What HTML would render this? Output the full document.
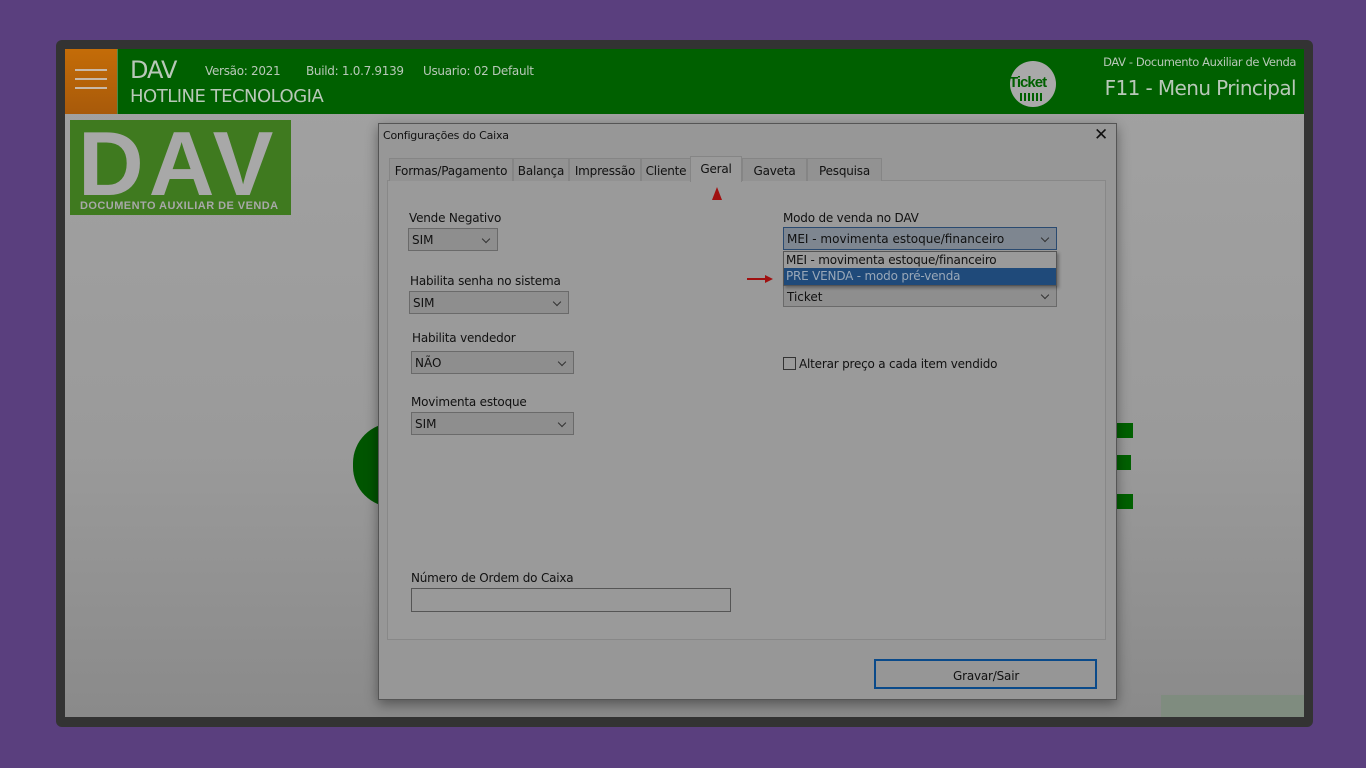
<!DOCTYPE html>
<html><head><meta charset="utf-8"><style>
*{margin:0;padding:0;box-sizing:border-box}
body{width:1366px;height:768px;background:#5a3f7e;position:relative;overflow:hidden;font-family:"Liberation Sans","DejaVu Sans",sans-serif;}
.frame{position:absolute;left:56px;top:40px;width:1257px;height:687px;background:#333;border-radius:6px}
.app{position:absolute;left:65px;top:49px;width:1239px;height:668px;background:linear-gradient(#a2a2a2,#9a9a9a 60%,#8a8a8a);overflow:hidden}
.hdr{position:absolute;left:0;top:0;width:1239px;height:65px;background:#006000}
.burger{position:absolute;left:0;top:0;width:52px;height:65px;background:linear-gradient(#c46c08,#a85a0a)}
.burger i{position:absolute;left:10px;width:32px;height:2px;background:#c8b8a8}
.t{position:absolute;color:#b8c8b8;white-space:nowrap}
.abs{position:absolute}
.dlg{position:absolute;left:378px;top:123px;width:739px;height:577px;background:#979797;border:1px solid #555;box-shadow:0 4px 12px rgba(0,0,0,.4)}
.lbl{position:absolute;font-size:12px;color:#111;white-space:nowrap;font-family:"DejaVu Sans",sans-serif;letter-spacing:-.2px}
.sel{position:absolute;height:23px;border:1px solid #6a6a6a;background:#8e8e8e;font-size:12px;color:#111;padding:4px 0 0 3px;font-family:"DejaVu Sans",sans-serif}
.sel:after{content:"";position:absolute;right:8px;top:7px;width:5px;height:5px;border-right:1px solid #333;border-bottom:1px solid #333;transform:rotate(45deg)}
.tab{position:absolute;top:158px;height:23px;border:1px solid #858585;border-bottom:none;background:#929292;font-size:12px;color:#111;padding:5px 0 0;text-align:center;font-family:"DejaVu Sans",sans-serif;letter-spacing:-.2px}
</style></head><body>
<div class="frame"></div>
<div class="app">
 <div class="hdr">
  <div class="burger"><i style="top:20px"></i><i style="top:29px"></i><i style="top:38px"></i></div>
  <div class="abs" style="left:52px;top:0;width:1px;height:65px;background:#4a8a4a"></div>
  <div class="t" style="left:65px;top:7px;font-size:24px;font-family:'DejaVu Sans',sans-serif;letter-spacing:-1px">DAV</div>
  <div class="t" style="left:140px;top:15px;font-size:12px;font-family:'DejaVu Sans',sans-serif;letter-spacing:-.3px">Versão: 2021</div>
  <div class="t" style="left:241px;top:15px;font-size:12px;font-family:'DejaVu Sans',sans-serif;letter-spacing:-.3px">Build: 1.0.7.9139</div>
  <div class="t" style="left:358px;top:15px;font-size:12px;font-family:'DejaVu Sans',sans-serif;letter-spacing:-.3px">Usuario: 02 Default</div>
  <div class="t" style="left:65px;top:37px;font-size:18px;font-family:'DejaVu Sans',sans-serif;letter-spacing:-.5px">HOTLINE TECNOLOGIA</div>
  <div class="abs" style="left:945px;top:12px;width:46px;height:46px;border-radius:50%;background:#a9a9a9"></div>
  <div class="t" style="left:944px;top:25px;font-size:15px;font-weight:bold;color:#006000;letter-spacing:-1px">Ticket</div>
  <div class="abs" style="left:955px;top:44px;width:24px;height:8px;background:repeating-linear-gradient(90deg,#006000 0 2px,transparent 2px 4px)"></div>
  <div class="t" style="right:8px;top:6px;font-size:11.5px;font-family:'DejaVu Sans',sans-serif;letter-spacing:-.4px">DAV - Documento Auxiliar de Venda</div>
  <div class="t" style="right:8px;top:27px;font-size:20px;font-family:'DejaVu Sans',sans-serif;letter-spacing:-.6px">F11 - Menu Principal</div>
 </div>
 <div class="abs" style="left:5px;top:71px;width:221px;height:95px;background:#3f7a1f"></div>
 <div class="t" style="left:13px;top:70px;font-size:91px;line-height:91px;font-weight:bold;color:#a8a8a8;letter-spacing:5px">DAV</div>
 <div class="t" style="left:15px;top:151px;font-size:11px;font-weight:bold;color:#a8a8a8;letter-spacing:.45px">DOCUMENTO AUXILIAR DE VENDA</div>
 <div class="abs" style="left:288px;top:374px;width:40px;height:84px;border-radius:40px 0 0 40px;background:#005500"></div>
 <div class="abs" style="left:1052px;top:374px;width:16px;height:15px;background:#006000"></div>
 <div class="abs" style="left:1052px;top:406px;width:14px;height:15px;background:#006000"></div>
 <div class="abs" style="left:1052px;top:445px;width:16px;height:15px;background:#006000"></div>
 <div class="abs" style="left:1096px;top:646px;width:143px;height:22px;background:#7f8c7f"></div>
</div>
<div class="dlg"></div>
<div class="lbl" style="left:383px;top:129px;font-size:11px">Configurações do Caixa</div>
<div class="lbl" style="left:1094px;top:125px;font-size:17px">✕</div>
<div class="abs" style="left:387px;top:180px;width:719px;height:460px;background:#9a9a9a;border:1px solid #888"></div>
<div class="tab" style="left:389px;width:124px">Formas/Pagamento</div>
<div class="tab" style="left:513px;width:56px">Balança</div>
<div class="tab" style="left:569px;width:72px">Impressão</div>
<div class="tab" style="left:641px;width:50px">Cliente</div>
<div class="tab" style="left:690px;top:156px;height:26px;width:52px;background:#9a9a9a;padding-top:5px">Geral</div>
<div class="tab" style="left:742px;width:65px">Gaveta</div>
<div class="tab" style="left:807px;width:75px">Pesquisa</div>
<div class="abs" style="left:712px;top:187px;width:0;height:0;border-left:5px solid transparent;border-right:5px solid transparent;border-bottom:13px solid #a01010"></div>

<div class="lbl" style="left:409px;top:211px">Vende Negativo</div>
<div class="sel" style="left:408px;top:228px;width:90px">SIM</div>
<div class="lbl" style="left:410px;top:274px">Habilita senha no sistema</div>
<div class="sel" style="left:409px;top:291px;width:160px">SIM</div>
<div class="lbl" style="left:412px;top:331px">Habilita vendedor</div>
<div class="sel" style="left:411px;top:351px;width:163px">NÃO</div>
<div class="lbl" style="left:411px;top:395px">Movimenta estoque</div>
<div class="sel" style="left:411px;top:412px;width:163px">SIM</div>
<div class="lbl" style="left:411px;top:571px">Número de Ordem do Caixa</div>
<div class="abs" style="left:411px;top:588px;width:320px;height:24px;border:1px solid #555;background:#999"></div>

<div class="lbl" style="left:783px;top:211px">Modo de venda no DAV</div>
<div class="sel" style="left:783px;top:227px;width:274px;background:#7e8690;border-color:#2a4a70">MEI - movimenta estoque/financeiro</div>
<div class="sel" style="left:783px;top:284px;width:274px;padding-top:5px">Ticket</div>
<div class="abs" style="left:783px;top:251px;width:274px;height:35px;border:1px solid #555;background:#9a9a9a;box-shadow:2px 2px 3px rgba(0,0,0,.3)"></div>
<div class="lbl" style="left:786px;top:253px">MEI - movimenta estoque/financeiro</div>
<div class="abs" style="left:784px;top:268px;width:272px;height:17px;background:#1f4a7a"></div>
<div class="lbl" style="left:786px;top:269px;color:#9aa8b8">PRE VENDA - modo pré-venda</div>
<div class="abs" style="left:747px;top:278px;width:20px;height:2px;background:#a01010"></div>
<div class="abs" style="left:765px;top:275px;width:0;height:0;border-top:4px solid transparent;border-bottom:4px solid transparent;border-left:8px solid #a01010"></div>
<div class="abs" style="left:783px;top:357px;width:13px;height:13px;border:1px solid #333"></div>
<div class="lbl" style="left:799px;top:357px">Alterar preço a cada item vendido</div>

<div class="abs" style="left:874px;top:659px;width:223px;height:30px;border:2px solid #0a4a8a;background:#969696"></div>
<div class="lbl" style="left:953px;top:669px">Gravar/Sair</div>
</body></html>
